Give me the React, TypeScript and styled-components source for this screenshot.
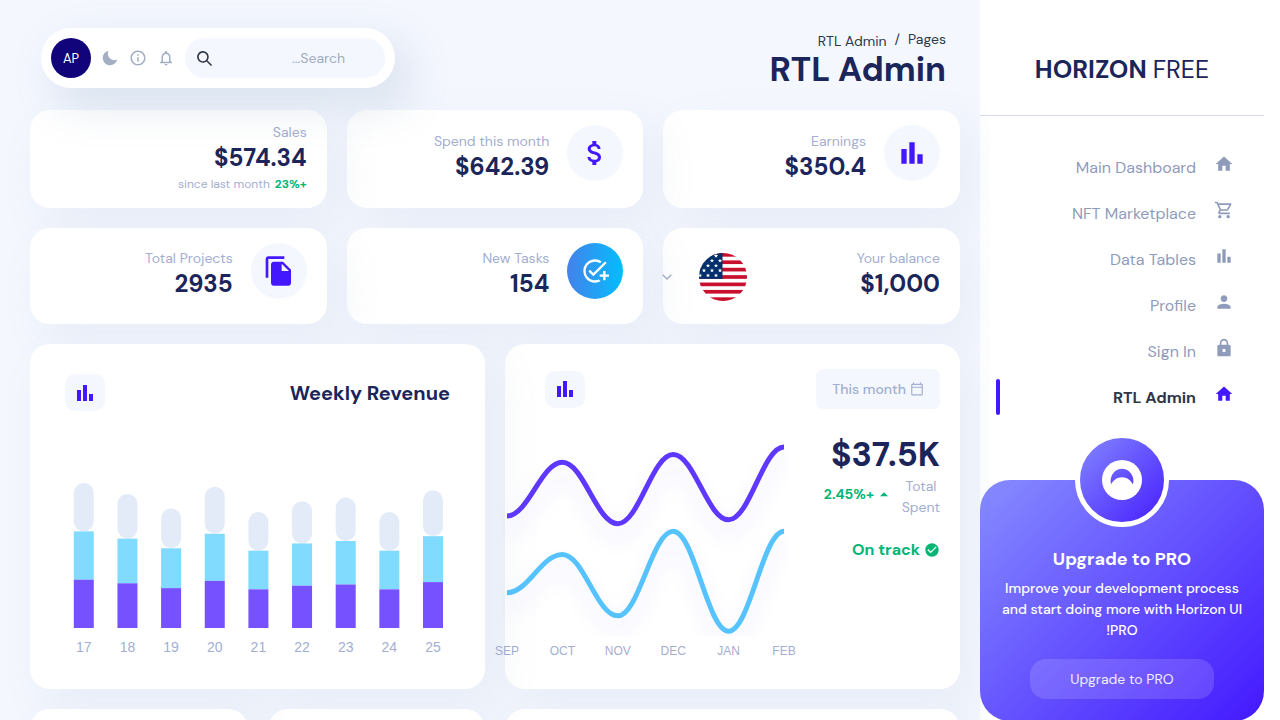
import React from "react";
import styled, { createGlobalStyle, css } from "styled-components";
import {
  MdAddTask,
  MdAttachMoney,
  MdBarChart,
  MdCheckCircle,
  MdFileCopy,
  MdHome,
  MdInfoOutline,
  MdLock,
  MdNotificationsNone,
  MdOutlineCalendarToday,
  MdOutlineShoppingCart,
  MdPerson,
} from "react-icons/md";
import { IoMdMoon } from "react-icons/io";
import { RiArrowUpSFill } from "react-icons/ri";

const navy = "#1b2559";
const brand = "#4318ff";
const muted = "#a3aed0";
const green = "#01b574";
const pale = "#f4f7fe";

const GlobalStyle = createGlobalStyle`
  *, *::before, *::after { box-sizing: border-box; }
  body {
    margin: 0;
    background: ${pale};
    color: ${navy};
    font-family: "DM Sans", Roboto, "Liberation Sans", sans-serif;
    font-size: 14px;
  }
  h1, h2, p, ul, dl, dt, dd { margin: 0; padding: 0; }
  button, input, select { font: inherit; border: 0; padding: 0; }
  a { color: inherit; text-decoration: none; }
  svg { display: block; flex: none; }
`;

const Shell = styled.div`
  display: flex;
  height: 100vh;
  overflow: hidden;
`;

/* ---------- sidebar ---------- */

const Sidebar = styled.aside`
  flex: 0 0 300px;
  padding-right: 16px;
  background: #fff;
`;

const Brand = styled.div`
  display: flex;
  justify-content: center;
  align-items: center;
  gap: 6px;
  height: 116px;
  padding-top: 24px;
  border-bottom: 1px solid #d8dbe8;
  font-size: 25px;
  line-height: 36px;
  direction: ltr;
  b { font-weight: 700; }
  span { font-weight: 400; }
`;

const Menu = styled.ul`
  list-style: none;
  display: flex;
  flex-direction: column;
  gap: 10px;
  padding: 33px 30px 0 16px;
`;

const MenuLink = styled.a<{ $active?: boolean }>`
  display: flex;
  align-items: center;
  height: 36px;
  gap: 18px;
  font-size: 16px;
  line-height: 24px;
  color: #8f9bba;
  svg { margin-bottom: 6px; }
  span { padding-top: 2px; }
  &::after {
    content: "";
    margin-inline-start: auto;
    width: 4px;
    height: 36px;
    border-radius: 5px;
  }
  ${(p) =>
    p.$active &&
    css`
      color: #2d3748;
      font-weight: 700;
      svg { color: ${brand}; }
      &::after { background: ${brand}; }
    `}
`;

const ProCard = styled.section`
  display: flex;
  flex-direction: column;
  align-items: center;
  margin-top: 65px;
  padding-bottom: 22px;
  border-radius: 30px;
  background: linear-gradient(135deg, #868cff 0%, ${brand} 100%);
  color: #fff;
  text-align: center;
`;

const ProBadge = styled.div`
  display: grid;
  place-items: center;
  width: 94px;
  height: 94px;
  margin-top: -47px;
  margin-bottom: 20px;
  border: 5px solid #fff;
  border-radius: 50%;
  background: linear-gradient(135deg, #868cff 0%, ${brand} 100%) border-box;
`;

const ProTitle = styled.h2`
  font-size: 18px;
  line-height: 24px;
  margin-bottom: 7px;
`;

const ProText = styled.p`
  font-size: 14px;
  line-height: 21px;
  font-weight: 500;
  padding: 0 16px;
  margin-bottom: 18px;
`;

const ProButton = styled.button`
  width: 65%;
  height: 40px;
  border-radius: 16px;
  background: rgba(255, 255, 255, 0.14);
  color: #f1edff;
  font-size: 14px;
`;

/* ---------- main area ---------- */

const Main = styled.main`
  flex: 1;
  min-width: 0;
  padding: 28px 20px 0 30px;
  background: ${pale};
  overflow: clip;
  overflow-clip-margin: 10px;
`;

const TopBar = styled.header`
  position: relative;
  z-index: 1;
  display: flex;
  justify-content: space-between;
  align-items: flex-start;
  height: 82px;
  padding: 0 14px 0 11px;
`;

const Crumbs = styled.nav`
  display: flex;
  gap: 8px;
  padding-top: 2px;
  font-size: 14px;
  line-height: 18px;
  color: #2d3748;
`;

const CurrentCrumb = styled.a`
  padding-top: 2px;
`;

const PageTitle = styled.h1`
  font-size: 34px;
  line-height: 40px;
  font-weight: 700;
`;

const Tools = styled.div`
  display: flex;
  align-items: center;
  gap: 10px;
  height: 60px;
  padding: 10px;
  border-radius: 30px;
  background: #fff;
  box-shadow: 14px 17px 40px 4px rgba(112, 144, 176, 0.18);
`;

const SearchBox = styled.label`
  display: flex;
  align-items: center;
  width: 200px;
  height: 40px;
  padding: 0 40px 0 12px;
  border-radius: 30px;
  background: ${pale};
  input {
    flex: 1;
    min-width: 0;
    background: transparent;
    outline: none;
    color: #2d3748;
  }
  input::placeholder { color: #a0aec0; opacity: 1; }
`;

const IconButton = styled.button`
  width: 18px;
  height: 18px;
  background: transparent;
  color: #a3aec2;
`;

const Avatar = styled.button`
  width: 40px;
  height: 40px;
  border-radius: 50%;
  background: #11047a;
  color: #fff;
  font-size: 13px;
`;

const CardGrid = styled.div<{ $columns: string }>`
  display: grid;
  grid-template-columns: ${(p) => p.$columns};
  gap: 20px;
  margin-bottom: 20px;
`;

const Card = styled.section`
  min-width: 0;
  border-radius: 20px;
  background: #fff;
  box-shadow: 14px 17px 40px 4px rgba(112, 144, 176, 0.08);
`;

const StatCard = styled(Card)`
  display: flex;
  gap: 18px;
  padding: 15px 20px;
`;

const StatIcon = styled.div<{ $gradient?: boolean }>`
  display: grid;
  place-items: center;
  flex: none;
  width: 56px;
  height: 56px;
  border-radius: 50%;
  color: ${(p) => (p.$gradient ? "#fff" : brand)};
  background: ${(p) => (p.$gradient ? "linear-gradient(90deg, #4481eb 0%, #04befe 100%)" : pale)};
`;

const StatText = styled.dl`
  align-self: center;
`;

const StatLabel = styled.dt`
  font-size: 14px;
  line-height: 14px;
  color: ${muted};
`;

const StatValue = styled.dd`
  padding-top: 2px;
  font-size: 24px;
  line-height: 34px;
  font-weight: 700;
`;

const StatNote = styled.dd`
  display: flex;
  gap: 5px;
  font-size: 12px;
  line-height: 18px;
  color: ${muted};
  b { color: ${green}; }
`;

const CurrencyPicker = styled.div`
  display: flex;
  align-items: center;
  gap: 8px;
  margin-top: 10px;
  margin-inline-start: auto;
  margin-inline-end: -28px;
  height: 48px;
`;

const SelectWrap = styled.div`
  display: grid;
  align-items: center;
  width: 36px;
  color: ${muted};
  > * { grid-area: 1 / 1; }
  svg { justify-self: end; margin-left: 7px; pointer-events: none; }
`;

const CurrencySelect = styled.select`
  width: 36px;
  height: 36px;
  appearance: none;
  background: transparent;
  color: transparent;
  option { color: ${navy}; }
`;

const StatRow = styled(CardGrid)`
  grid-auto-rows: minmax(96px, auto);
`;

const ChartCard = styled(Card)<{ $pad: string }>`
  height: 345px;
  padding: ${(p) => p.$pad};
`;

const ChartHead = styled.div<{ $inset?: boolean }>`
  display: flex;
  align-items: center;
  justify-content: space-between;
  padding-inline-end: ${(p) => (p.$inset ? "20px" : "0")};
`;

const ChartTitle = styled.h2`
  font-size: 20px;
  line-height: 30px;
  font-weight: 700;
`;

const SquareButton = styled.button`
  display: grid;
  place-items: center;
  width: 40px;
  height: 37px;
  border-radius: 10px;
  background: ${pale};
  color: ${brand};
`;

const MonthButton = styled.button`
  display: flex;
  align-items: center;
  gap: 4px;
  height: 40px;
  padding: 0 16px;
  border-radius: 7px;
  background: ${pale};
  color: ${muted};
  font-size: 14px;
  font-weight: 500;
`;

const BarSvg = styled.svg`
  width: 100%;
  height: 200px;
  margin-top: 59px;
`;

const SpentBody = styled.div`
  display: flex;
  gap: 16px;
`;

const SpentSummary = styled.div`
  flex: 0 0 124px;
  padding-top: 25px;
`;

const SpentTotal = styled.p`
  font-size: 34px;
  line-height: 42px;
  font-weight: 700;
`;

const SpentDetail = styled.div`
  display: flex;
  align-items: center;
  gap: 10px;
  margin-bottom: 20px;
  line-height: 21px;
`;

const SpentLabel = styled.p`
  width: 38px;
  text-align: center;
  color: ${muted};
`;

const Change = styled.span`
  display: flex;
  align-items: center;
  gap: 2px;
  margin-bottom: 5px;
  color: ${green};
  font-weight: 700;
`;

const OnTrack = styled.p`
  display: flex;
  align-items: center;
  gap: 4px;
  font-size: 16px;
  line-height: 24px;
  font-weight: 700;
  color: ${green};
`;

const LineHolder = styled.div`
  flex: 1;
  min-width: 0;
  margin-inline-end: -35px;
`;

const LineSvg = styled.svg`
  width: 100%;
  height: 240px;
  margin-top: 21px;
  overflow: visible;
`;

const AxisText = styled.text`
  font-family: Helvetica, "Liberation Sans", Arial, sans-serif;
  fill: ${muted};
  text-anchor: middle;
  direction: ltr;
`;

const LowerCard = styled(Card)`
  height: 345px;
`;

/* ---------- drawings ---------- */

const stars = [0, 1, 2, 3, 4].flatMap((row) =>
  [0, 1, 2].map((col) => ({ x: (row % 2 ? 5 : 1) + col * 8, y: 2.8 + row * 4.9 }))
);

function Flag() {
  const stripe = 48 / 13;
  return (
    <svg width="48" height="48" viewBox="0 0 48 48" role="img" aria-label="USA">
      <clipPath id="flag-disc">
        <circle cx="24" cy="24" r="24" />
      </clipPath>
      <g clipPath="url(#flag-disc)">
        <rect width="48" height="48" fill="#fff" />
        {[0, 2, 4, 6, 8, 10, 12].map((i) => (
          <rect key={i} y={i * stripe} width="48" height={stripe} fill="#c8102e" />
        ))}
        <rect width="23.5" height={stripe * 7} fill="#012f6b" />
        {stars.map(({ x, y }) => (
          <path
            key={`${x}-${y}`}
            transform={`translate(${x} ${y}) scale(1.15)`}
            d="M0-1.9.5-.6 1.9-.6.8.3 1.2 1.6 0 .8-1.2 1.6-.8.3-1.9-.6-.5-.6Z"
            fill="#fff"
          />
        ))}
      </g>
    </svg>
  );
}

function ProLogo() {
  return (
    <svg width="40" height="40" viewBox="0 0 40 40" aria-hidden="true">
      <defs>
        <linearGradient id="crescent" x1="0" y1="0" x2="1" y2="1">
          <stop offset="0" stopColor="#6f66ff" />
          <stop offset="1" stopColor="#5a3dff" />
        </linearGradient>
      </defs>
      <circle cx="20" cy="20" r="20" fill="#fff" />
      <path
        d="M9.200 24.300C8.200 21.800 8.400 19 9.400 16.400 11.200 11.700 15.200 8.700 20 8.700s8.800 3 10.600 7.700c1 2.600 1.200 5.400.2 7.900C28.800 20 24.800 17.200 20 17.200S11.200 20 9.200 24.300Z"
        fill="url(#crescent)"
      />
    </svg>
  );
}

function SearchIcon() {
  return (
    <svg width="15" height="15" viewBox="0 0 24 24" aria-hidden="true">
      <path
        fill="#2d3748"
        d="M23.384,21.619,16.855,15.09a9.284,9.284,0,1,0-1.768,1.768l6.529,6.529a1.266,1.266,0,0,0,1.768,0A1.251,1.251,0,0,0,23.384,21.619ZM2.75,9.5a6.75,6.75,0,1,1,6.75,6.75A6.758,6.758,0,0,1,2.75,9.5Z"
      />
    </svg>
  );
}

const days = [17, 18, 19, 20, 21, 22, 23, 24, 25];
const revenue = [400, 370, 330, 390, 320, 350, 360, 320, 380];

function BarGraph() {
  const base = 158;
  return (
    <BarSvg viewBox="0 0 385 200" role="img" aria-label="Weekly revenue by day">
      {days.map((day, i) => {
        const cx = 18.8 + i * 43.65;
        const h = revenue[i] * 0.1208;
        return (
          <g key={day}>
            <rect x={cx - 10} y={base - h * 3} width="20" height={h} rx="10" fill="#e3ebf9" />
            <rect x={cx - 10} y={base - h * 2} width="20" height={h} fill="#81daff" />
            <rect x={cx - 10} y={base - h} width="20" height={h} fill="#7551ff" />
            <AxisText x={cx} y="182" fontSize="14">
              {day}
            </AxisText>
          </g>
        );
      })}
    </BarSvg>
  );
}

const months = ["SEP", "OCT", "NOV", "DEC", "JAN", "FEB"];

function curve(values: number[]) {
  const step = 55.4;
  const points = values.map((v, i) => [17 + i * step, 278 - v * 3.84]);
  return points.reduce((path, [x, y], i) => {
    if (i === 0) return `M${x} ${y}`;
    const [px, py] = points[i - 1];
    return `${path}C${px + step * 0.38} ${py} ${x - step * 0.38} ${y} ${x} ${y}`;
  }, "");
}

function LineGraph() {
  return (
    <LineSvg viewBox="0 0 310 240" role="img" aria-label="Spending by month">
      <defs>
        <filter id="line-shadow" filterUnits="userSpaceOnUse" x="12" y="0" width="286" height="206">
          <feDropShadow dx="0" dy="13" stdDeviation="10" floodColor={brand} floodOpacity="0.1" />
        </filter>
      </defs>
      <g fill="none" strokeWidth="5">
        <path d={curve([50, 64, 48, 66, 49, 68])} stroke="#5e37ff" filter="url(#line-shadow)" />
        <path d={curve([30, 40, 24, 46, 20, 46])} stroke="#57c3ff" filter="url(#line-shadow)" />
      </g>
      {months.map((month, i) => (
        <AxisText key={month} x={17 + i * 55.4} y="225" fontSize="12">
          {month}
        </AxisText>
      ))}
    </LineSvg>
  );
}

/* ---------- page ---------- */

const menu = [
  { label: "Main Dashboard", Icon: MdHome },
  { label: "NFT Marketplace", Icon: MdOutlineShoppingCart },
  { label: "Data Tables", Icon: MdBarChart },
  { label: "Profile", Icon: MdPerson },
  { label: "Sign In", Icon: MdLock },
  { label: "RTL Admin", Icon: MdHome, active: true },
];

type StatProps = {
  label: string;
  value: string;
  icon?: React.ReactNode;
  gradient?: boolean;
  note?: React.ReactNode;
  children?: React.ReactNode;
};

function Stat({ label, value, icon, gradient, note, children }: StatProps) {
  return (
    <StatCard>
      {icon && <StatIcon $gradient={gradient}>{icon}</StatIcon>}
      <StatText>
        <StatLabel>{label}</StatLabel>
        <StatValue>{value}</StatValue>
        {note && <StatNote>{note}</StatNote>}
      </StatText>
      {children}
    </StatCard>
  );
}

export default function App() {
  return (
    <Shell dir="rtl">
      <GlobalStyle />
      <Sidebar>
        <Brand>
          <b>HORIZON</b>
          <span>FREE</span>
        </Brand>
        <nav>
          <Menu>
            {menu.map(({ label, Icon, active }) => (
              <li key={label}>
                <MenuLink href="#" $active={active}>
                  <Icon size={20} />
                  <span>{label}</span>
                </MenuLink>
              </li>
            ))}
          </Menu>
        </nav>
        <ProCard>
          <ProBadge>
            <ProLogo />
          </ProBadge>
          <ProTitle>Upgrade to PRO</ProTitle>
          <ProText>Improve your development process and start doing more with Horizon UI PRO!</ProText>
          <ProButton type="button">Upgrade to PRO</ProButton>
        </ProCard>
      </Sidebar>

      <Main>
        <TopBar>
          <div>
            <Crumbs aria-label="Breadcrumb">
              <a href="#">Pages</a>
              <span>/</span>
              <CurrentCrumb href="#">RTL Admin</CurrentCrumb>
            </Crumbs>
            <PageTitle>RTL Admin</PageTitle>
          </div>
          <Tools>
            <SearchBox>
              <input type="text" placeholder="Search..." aria-label="Search" />
              <SearchIcon />
            </SearchBox>
            <IconButton type="button" aria-label="Notifications">
              <MdNotificationsNone size={18} />
            </IconButton>
            <IconButton type="button" aria-label="Information">
              <MdInfoOutline size={18} />
            </IconButton>
            <IconButton type="button" aria-label="Dark mode">
              <IoMdMoon size={18} />
            </IconButton>
            <Avatar type="button">AP</Avatar>
          </Tools>
        </TopBar>

        <StatRow $columns="repeat(3, 1fr)">
          <Stat label="Earnings" value="$350.4" icon={<MdBarChart size={32} />} />
          <Stat label="Spend this month" value="$642.39" icon={<MdAttachMoney size={32} />} />
          <Stat
            label="Sales"
            value="$574.34"
            note={
              <>
                <b>+23%</b>
                <span>since last month</span>
              </>
            }
          />
        </StatRow>
        <StatRow $columns="repeat(3, 1fr)">
          <Stat label="Your balance" value="$1,000">
            <CurrencyPicker>
              <Flag />
              <SelectWrap>
                <CurrencySelect aria-label="Currency" defaultValue="usd">
                  <option value="usd">USD</option>
                  <option value="eur">EUR</option>
                  <option value="gba">GBA</option>
                </CurrencySelect>
                <svg width="10" height="6" viewBox="0 0 10 6" aria-hidden="true">
                  <path d="M.7.7 5 5 9.3.7" fill="none" stroke="currentColor" strokeWidth="1.4" />
                </svg>
              </SelectWrap>
            </CurrencyPicker>
          </Stat>
          <Stat label="New Tasks" value="154" icon={<MdAddTask size={28} />} gradient />
          <Stat label="Total Projects" value="2935" icon={<MdFileCopy size={32} />} />
        </StatRow>

        <CardGrid $columns="repeat(2, 1fr)">
          <ChartCard $pad="25px 20px">
            <ChartHead $inset>
              <MonthButton type="button">
                <MdOutlineCalendarToday size={14} />
                This month
              </MonthButton>
              <SquareButton type="button" aria-label="Spending chart options">
                <MdBarChart size={24} />
              </SquareButton>
            </ChartHead>
            <SpentBody>
              <SpentSummary>
                <SpentTotal>$37.5K</SpentTotal>
                <SpentDetail>
                  <SpentLabel>Total Spent</SpentLabel>
                  <Change>
                    <RiArrowUpSFill size={16} />
                    +2.45%
                  </Change>
                </SpentDetail>
                <OnTrack>
                  <MdCheckCircle size={16} />
                  On track
                </OnTrack>
              </SpentSummary>
              <LineHolder>
                <LineGraph />
              </LineHolder>
            </SpentBody>
          </ChartCard>
          <ChartCard $pad="30px 35px">
            <ChartHead>
              <ChartTitle>Weekly Revenue</ChartTitle>
              <SquareButton type="button" aria-label="Revenue chart options">
                <MdBarChart size={24} />
              </SquareButton>
            </ChartHead>
            <BarGraph />
          </ChartCard>
        </CardGrid>

        <CardGrid $columns="455fr 217fr 218fr">
          <LowerCard />
          <LowerCard />
          <LowerCard />
        </CardGrid>
      </Main>
    </Shell>
  );
}
